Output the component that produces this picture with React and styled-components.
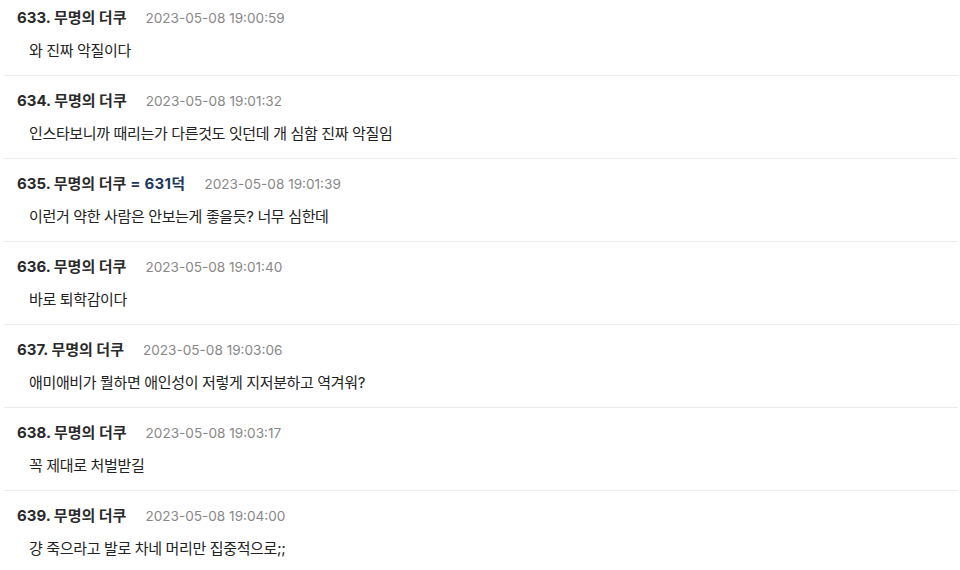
import React from 'react';
import styled, { createGlobalStyle } from 'styled-components';

const GlobalStyle = createGlobalStyle`
  html, body {
    margin: 0;
    padding: 0;
    background: #fff;
    overflow: hidden;
  }
  body {
    font-family: Inter, "Noto Sans CJK KR", sans-serif;
    color: #222;
  }
`;

const CommentList = styled.ul`
  list-style: none;
  margin: -7px 2px 0 4px;
  padding: 0;
`;

const Comment = styled.li`
  padding: 15px 0 14px 13px;
  border-bottom: 1px solid #ececec;
`;

const Header = styled.div`
  display: flex;
  align-items: center;
  gap: 19px;
  height: 20px;
  line-height: 20px;
`;

const Author = styled.span`
  font-size: 15px;
  font-weight: 700;
  color: #2a2a2a;
`;

const Reply = styled.span`
  color: #22395a;
  letter-spacing: 0.3px;
`;

const Time = styled.span`
  font-size: 13.6px;
  color: #888;
`;

const Body = styled.p`
  margin: 13px 0 0 12px;
  font-size: 15px;
  line-height: 20px;
  letter-spacing: -0.35px;
  color: #222;
`;

const comments = [
  { no: 633, time: '2023-05-08 19:00:59', text: '와 진짜 악질이다' },
  { no: 634, time: '2023-05-08 19:01:32', text: '인스타보니까 때리는가 다른것도 잇던데 개 심함 진짜 악질임' },
  { no: 635, reply: 631, time: '2023-05-08 19:01:39', text: '이런거 약한 사람은 안보는게 좋을듯? 너무 심한데' },
  { no: 636, time: '2023-05-08 19:01:40', text: '바로 퇴학감이다' },
  { no: 637, time: '2023-05-08 19:03:06', text: '애미애비가 뭘하면 애인성이 저렇게 지저분하고 역겨워?' },
  { no: 638, time: '2023-05-08 19:03:17', text: '꼭 제대로 처벌받길' },
  { no: 639, time: '2023-05-08 19:04:00', text: '걍 죽으라고 발로 차네 머리만 집중적으로;;' },
];

export default function App() {
  return (
    <>
      <GlobalStyle />
      <CommentList>
        {comments.map(c => (
          <Comment key={c.no}>
            <Header>
              <Author>
                {c.no}. 무명의 더쿠{c.reply && <Reply> = {c.reply}덕</Reply>}
              </Author>
              <Time>{c.time}</Time>
            </Header>
            <Body>{c.text}</Body>
          </Comment>
        ))}
      </CommentList>
    </>
  );
}
